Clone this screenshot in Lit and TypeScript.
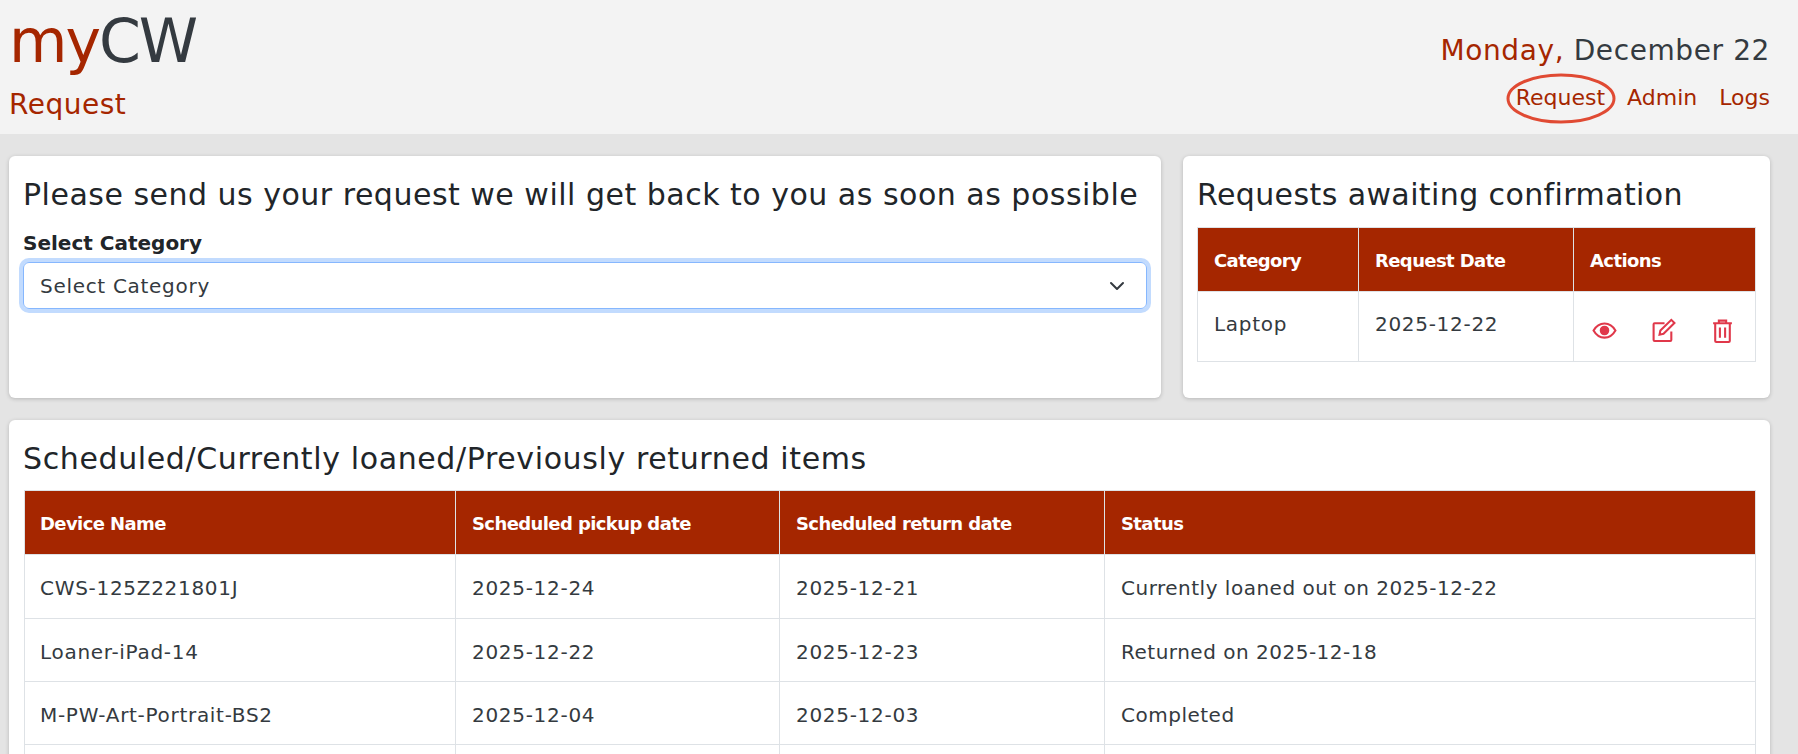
import {LitElement, css, html} from 'lit'
import {customElement} from 'lit/decorators.js'

const loans = [
  ['CWS-125Z221801J', '2025-12-24', '2025-12-21', 'Currently loaned out on 2025-12-22'],
  ['Loaner-iPad-14', '2025-12-22', '2025-12-23', 'Returned on 2025-12-18'],
  ['M-PW-Art-Portrait-BS2', '2025-12-04', '2025-12-03', 'Completed'],
  ['', '', '', ''],
]

@customElement('app-root')
export class AppRoot extends LitElement {
  static styles = css`
    :host {
      display: block;
      position: relative;
      height: 754px;
      overflow: hidden;
      background: #e4e4e4;
      color: #212529;
      font-family: "DejaVu Sans", sans-serif;
      font-size: 20px;
      letter-spacing: 0.7px;
    }

    header {
      display: flex;
      justify-content: space-between;
      height: 134px;
      box-sizing: border-box;
      padding: 3px 28px 0 9px;
      background: #f3f3f3;
    }

    .logo {
      font-size: 60px;
      line-height: 76px;
      letter-spacing: -2px;
      color: #343a40;
    }

    .accent { color: #a52600; }

    .page {
      font-size: 28px;
      line-height: 34px;
      letter-spacing: 0.5px;
      margin-top: 9px;
      color: #a52600;
    }

    .side {
      display: flex;
      flex-direction: column;
      align-items: flex-end;
    }

    .date {
      font-size: 28px;
      line-height: 34px;
      letter-spacing: 0.6px;
      margin-top: 31px;
      color: #343a40;
    }

    nav {
      display: flex;
      gap: 22px;
      margin-top: 17px;
      font-size: 22px;
      line-height: 26px;
      letter-spacing: 0;
      color: #a52600;
    }

    .ring {
      position: absolute;
      left: 1506px;
      top: 73px;
    }

    main {
      display: grid;
      grid-template-columns: 1152px 587px;
      gap: 22px;
      padding: 22px 28px 0 9px;
    }

    .card {
      background: #fff;
      border-radius: 6px;
      box-shadow: 0 1px 4px rgba(0, 0, 0, 0.2);
      padding: 0 14px;
      height: 242px;
      box-sizing: border-box;
    }

    .wide {
      grid-column: 1 / 3;
      height: 400px;
    }

    h2 {
      margin: 0;
      font-weight: 400;
      font-size: 30px;
      line-height: 39px;
      letter-spacing: 0.5px;
      padding-top: 19px;
      color: #212529;
    }

    .narrow h2 { letter-spacing: 0.4px; }
    .wide h2 { letter-spacing: 0.62px; }

    label {
      display: block;
      margin-top: 16px;
      font-weight: 700;
      font-size: 20px;
      line-height: 26px;
      letter-spacing: 0;
    }

    .select {
      display: flex;
      align-items: center;
      justify-content: space-between;
      height: 47px;
      box-sizing: border-box;
      margin-top: 6px;
      padding: 0 21px 0 16px;
      border: 1px solid #86b7fe;
      border-radius: 6px;
      box-shadow: 0 0 0 4px #c2dbfe;
      color: #343a40;
    }

    table {
      width: 100%;
      border-collapse: collapse;
      table-layout: fixed;
      margin-top: 13px;
    }

    .wide table {
      width: calc(100% - 1px);
      margin-top: 12px;
      margin-left: 1px;
    }

    th {
      background: #a52600;
      color: #fff;
      font-size: 18px;
      font-weight: 700;
      letter-spacing: -0.6px;
      text-align: left;
      height: 64px;
      padding: 1px 16px 0;
      border: 1px solid #dee2e6;
      box-sizing: border-box;
    }

    td {
      height: 63px;
      padding: 3px 16px 0;
      border: 1px solid #dee2e6;
      box-sizing: border-box;
      color: #343a40;
    }

    .wide tr:nth-child(2) td { height: 64px; }

    .wide th:first-child,
    .wide td:first-child { padding-left: 15px; }

    .wide td:last-child { letter-spacing: 0.5px; }

    .low td { height: 70px; vertical-align: top; padding-top: 20px; }

    .icons {
      display: flex;
      gap: 34px;
      padding: 6px 0 0 2px;
      color: #e0384a;
    }

    svg.icon {
      width: 25px;
      height: 25px;
      fill: none;
      stroke: currentColor;
      stroke-width: 2;
    }
  `

  render() {
    return html`
      <header>
        <div>
          <div class="logo"><span class="accent">my</span>CW</div>
          <div class="page">Request</div>
        </div>
        <div class="side">
          <div class="date"><span class="accent">Monday,</span> December 22</div>
          <nav><span>Request</span><span>Admin</span><span>Logs</span></nav>
        </div>
      </header>
      <svg class="ring" width="110" height="51" viewBox="0 0 110 51">
        <ellipse cx="55" cy="25.500" rx="53" ry="23.500" fill="none" stroke="#e04a33" stroke-width="3"></ellipse>
      </svg>
      <main>
        <section class="card">
          <h2>Please send us your request we will get back to you as soon as possible</h2>
          <label>Select Category</label>
          <div class="select">
            <span>Select Category</span>
            <svg width="16" height="16" viewBox="0 0 16 16" fill="none" stroke="#343a40" stroke-width="2" stroke-linecap="round" stroke-linejoin="round"><path d="M2 5l6 6 6-6"></path></svg>
          </div>
        </section>
        <section class="card narrow">
          <h2>Requests awaiting confirmation</h2>
          <table>
            <colgroup><col style="width:161px"><col style="width:215px"><col></colgroup>
            <tr><th>Category</th><th>Request Date</th><th>Actions</th></tr>
            <tr class="low">
              <td>Laptop</td>
              <td>2025-12-22</td>
              <td>
                <div class="icons">
                  <svg class="icon" viewBox="0 0 24 24"><path d="M1.500 12C4 7.500 7.600 5.200 12 5.200s8 2.300 10.500 6.800C20 16.500 16.400 18.800 12 18.800S4 16.500 1.500 12z"></path><circle cx="12" cy="12" r="3.600" fill="currentColor"></circle></svg>
                  <svg class="icon" viewBox="0 0 24 24"><path d="M13 5H3.500a1 1 0 0 0-1 1v15a1 1 0 0 0 1 1h15a1 1 0 0 0 1-1v-8"></path><path d="M9 12L19.500 1.800l3 3L12 15.200l-3.800.8z"></path></svg>
                  <svg class="icon" viewBox="0 0 24 24"><path d="M3 5h18M8.500 5V2.500h7V5M5 5v17a1 1 0 0 0 1 1h12a1 1 0 0 0 1-1V5M9.500 9v10M14.500 9v10"></path></svg>
                </div>
              </td>
            </tr>
          </table>
        </section>
        <section class="card wide">
          <h2>Scheduled/Currently loaned/Previously returned items</h2>
          <table>
            <colgroup><col style="width:431px"><col style="width:324px"><col style="width:325px"><col></colgroup>
            <tr><th>Device Name</th><th>Scheduled pickup date</th><th>Scheduled return date</th><th>Status</th></tr>
            ${loans.map(row => html`<tr>${row.map(cell => html`<td>${cell}</td>`)}</tr>`)}
          </table>
        </section>
      </main>
    `
  }
}
